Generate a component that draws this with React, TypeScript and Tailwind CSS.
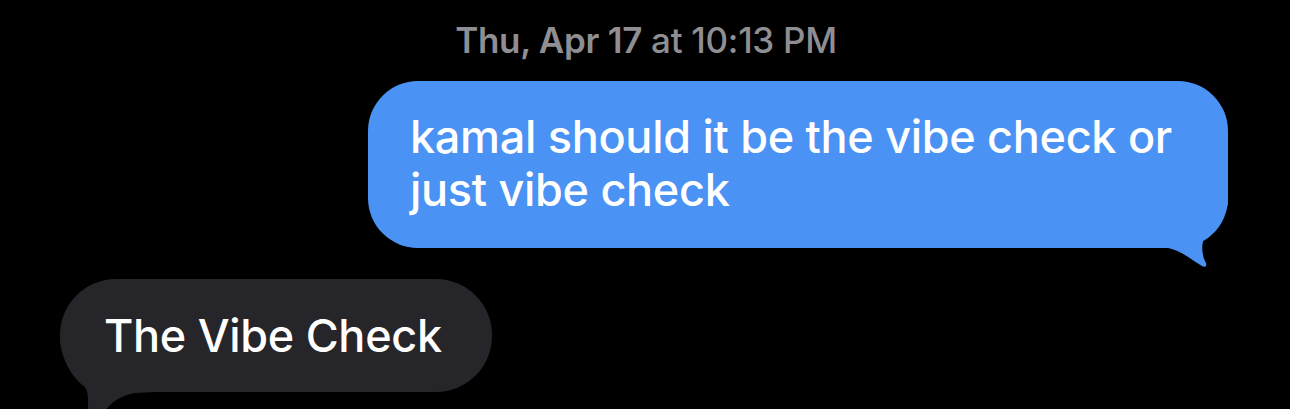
import React from "react";

export default function App() {
  const font = { fontFamily: "Inter, 'Noto Sans', sans-serif" };
  return (
    <div className="w-full h-[409px] bg-black overflow-hidden flex flex-col" style={font}>
      <div className="h-[81px] flex items-center justify-center pb-[1px]">
        <div className="text-[35px] leading-none text-[#8e8e93] tracking-[-0.3px] pl-[2px]">
          <span className="font-semibold">Thu, Apr 17</span>
          <span className="font-medium"> at 10:13 PM</span>
        </div>
      </div>
      <div className="flex justify-end pr-[62px]">
        <div className="relative w-[860px] h-[167px] rounded-[50px] bg-[#4a93f5] pl-[42px] pt-[29px]">
          <div className="relative z-10 text-white text-[45px] leading-[53px] font-medium tracking-[-0.3px]">
            <div>kamal should it be the vibe check or</div>
            <div>just vibe check</div>
          </div>
          <svg
            className="absolute left-[782px] top-[119px]"
            width="80"
            height="70"
            viewBox="0 0 80 70"
          >
            <path
              d="M0,0 L0,48 L18,48 C30,50 42,60 52,66 C55,68 57,66 56,63 C52,56 51,46 54,38 C58,30 66,24 72,17 C76,12 78,6 78,0 Z"
              fill="#4a93f5"
            />
          </svg>
        </div>
      </div>
      <div className="pl-[60px] mt-[31px]">
        <div className="relative w-[432px] h-[113px] rounded-[56px] bg-[#262529] pl-[44px] flex items-center">
          <div className="relative z-10 text-white text-[45px] leading-none font-medium tracking-[-0.3px]">
            The Vibe Check
          </div>
          <svg
            className="absolute left-[-5px] top-[56px]"
            width="110"
            height="85"
            viewBox="0 0 110 85"
          >
            <path
              d="M5,0 C5,20 14,40 30,52 C34,58 34,70 31,85 L45,85 C50,72 62,61 80,58 L100,57 L100,0 Z"
              fill="#262529"
            />
          </svg>
        </div>
      </div>
    </div>
  );
}
